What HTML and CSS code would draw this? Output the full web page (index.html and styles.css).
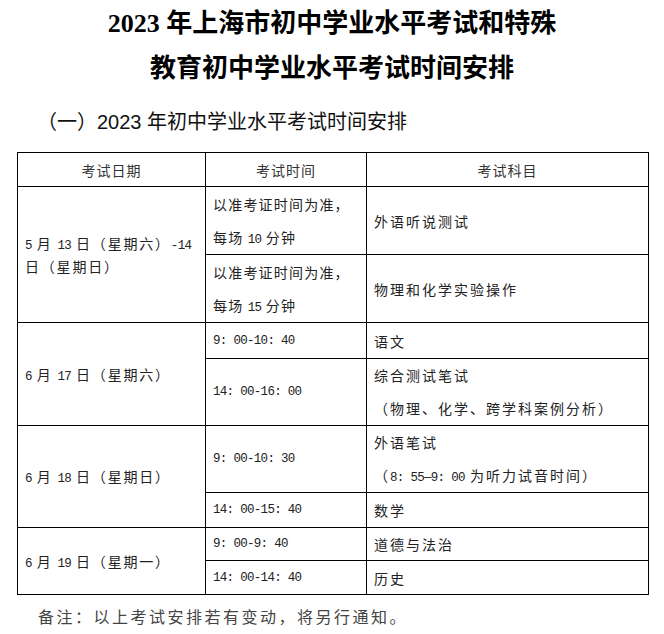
FILE: index.html
```html
<!DOCTYPE html>
<html lang="zh-CN">
<head>
<meta charset="utf-8">
<title>2023年上海市初中学业水平考试时间安排</title>
<link rel="stylesheet" href="styles.css">
</head>
<body>
<div class="page">
  <h1 class="title">
    <span class="title-line">2023 年上海市初中学业水平考试和特殊</span>
    <span class="title-line">教育初中学业水平考试时间安排</span>
  </h1>
  <h2 class="subtitle">（一）2023 年初中学业水平考试时间安排</h2>
  <table class="schedule">
    <colgroup>
      <col class="c-date">
      <col class="c-time">
      <col class="c-subj">
    </colgroup>
    <thead>
      <tr class="h-head">
        <th>考试日期</th>
        <th>考试时间</th>
        <th>考试科目</th>
      </tr>
    </thead>
    <tbody>
      <tr class="h-68">
        <td rowspan="2" class="date"><span class="d">5</span> 月 <span class="d">13</span> 日（星期六）<span class="d">-14</span><br>日（星期日）</td>
        <td class="multi">以准考证时间为准，<br>每场 <span class="d">10</span> 分钟</td>
        <td class="subj">外语听说测试</td>
      </tr>
      <tr class="h-68">
        <td class="multi">以准考证时间为准，<br>每场 <span class="d">15</span> 分钟</td>
        <td class="subj">物理和化学实验操作</td>
      </tr>
      <tr class="h-36">
        <td rowspan="2" class="date"><span class="d">6</span> 月 <span class="d">17</span> 日（星期六）</td>
        <td class="num">9: 00-10: 40</td>
        <td class="subj">语文</td>
      </tr>
      <tr class="h-67">
        <td class="num">14: 00-16: 00</td>
        <td class="subj multi">综合测试笔试<br>（物理、化学、跨学科案例分析）</td>
      </tr>
      <tr class="h-67">
        <td rowspan="2" class="date"><span class="d">6</span> 月 <span class="d">18</span> 日（星期日）</td>
        <td class="num">9: 00-10: 30</td>
        <td class="subj multi">外语笔试<br>（<span class="d">8: 55—9: 00</span> 为听力试音时间）</td>
      </tr>
      <tr class="h-35">
        <td class="num">14: 00-15: 40</td>
        <td class="subj">数学</td>
      </tr>
      <tr class="h-33">
        <td rowspan="2" class="date"><span class="d">6</span> 月 <span class="d">19</span> 日（星期一）</td>
        <td class="num">9: 00-9: 40</td>
        <td class="subj">道德与法治</td>
      </tr>
      <tr class="h-34">
        <td class="num">14: 00-14: 40</td>
        <td class="subj">历史</td>
      </tr>
    </tbody>
  </table>
  <p class="note">备注：以上考试安排若有变动，将另行通知。</p>
</div>
</body>
</html>
```
FILE: styles.css
```css
html, body {
  margin: 0;
  padding: 0;
  background: #ffffff;
}

.page {
  width: 664px;
  padding: 1px 0 0 0;
  box-sizing: border-box;
  color: #1a1a1a;
  font-family: "Liberation Serif", "Noto Sans CJK SC", serif;
}

.title {
  margin: 0;
  display: flex;
  flex-direction: column;
  align-items: center;
  font-size: 26px;
  font-weight: 700;
  line-height: 45px;
  color: #000;
  font-family: "Liberation Serif", "Noto Sans CJK SC", serif;
}

.subtitle {
  margin: 17px 0 0 37px;
  font-size: 20px;
  font-weight: 400;
  line-height: 29px;
  color: #111;
  font-family: "Liberation Sans", "Noto Sans CJK SC", sans-serif;
}

.schedule {
  margin: 15px 0 0 17px;
  width: 631px;
  border-collapse: collapse;
  table-layout: fixed;
  font-family: "Noto Sans CJK SC", sans-serif;
  font-size: 14px;
  color: #222;
}

.c-date { width: 188px; }
.c-time { width: 161px; }
.c-subj { width: 282px; }

.schedule th,
.schedule td {
  border: 1px solid #000;
  padding: 0 0 0 7px;
  vertical-align: middle;
  text-align: left;
  letter-spacing: 1.2px;
  line-height: 20px;
}

.schedule th {
  text-align: center;
  padding: 0;
  font-weight: 400;
  letter-spacing: 1px;
  color: #333;
}

.schedule td.date {
  line-height: 23px;
  letter-spacing: 1.8px;
  white-space: nowrap;
}

.schedule td.subj {
  letter-spacing: 2px;
}

.schedule td.multi {
  line-height: 33px;
}

.d,
.schedule td.num {
  font-family: "Liberation Mono", monospace;
  font-size: 12.5px;
  letter-spacing: -0.7px;
}

.d {
  line-height: 1;
}

.h-head { height: 34px; }
.h-68 { height: 68px; }
.h-67 { height: 67px; }
.h-36 { height: 36px; }
.h-35 { height: 35px; }
.h-34 { height: 34px; }
.h-33 { height: 33px; }

.note {
  margin: 9px 0 0 38px;
  font-family: "Noto Sans CJK SC", sans-serif;
  font-size: 16px;
  letter-spacing: 2.5px;
  line-height: 24px;
  color: #444;
}
```
